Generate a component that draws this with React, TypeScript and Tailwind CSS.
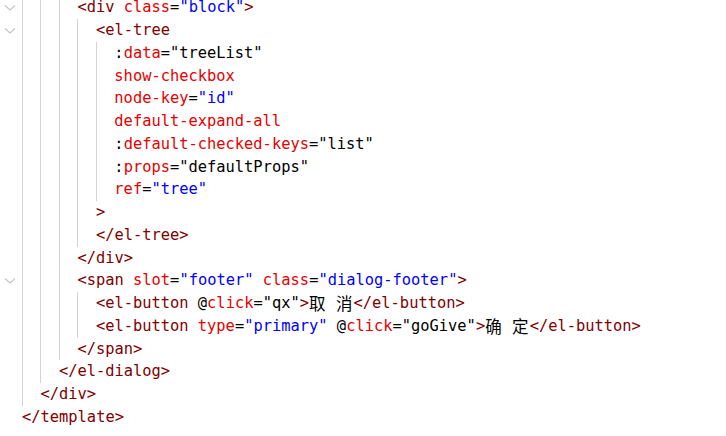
import React from 'react';

type Tok = [string, string];
type Line = { level: number; fold?: boolean; toks: Tok[] };

const colors: Record<string, string> = {
  t: 'text-[#800000]',
  a: 'text-[#e50000]',
  v: 'text-[#0000ff]',
  k: 'text-[#000000]',
  c: 'text-[#000000]',
};

const lines: Line[] = [
  { level: 3, fold: true, toks: [['t', '<div'], ['a', ' class'], ['k', '='], ['v', '"block"'], ['t', '>']] },
  { level: 4, fold: true, toks: [['t', '<el-tree']] },
  { level: 5, toks: [['k', ':'], ['a', 'data'], ['k', '="treeList"']] },
  { level: 5, toks: [['a', 'show-checkbox']] },
  { level: 5, toks: [['a', 'node-key'], ['k', '='], ['v', '"id"']] },
  { level: 5, toks: [['a', 'default-expand-all']] },
  { level: 5, toks: [['k', ':'], ['a', 'default-checked-keys'], ['k', '="list"']] },
  { level: 5, toks: [['k', ':'], ['a', 'props'], ['k', '="defaultProps"']] },
  { level: 5, toks: [['a', 'ref'], ['k', '='], ['v', '"tree"']] },
  { level: 4, toks: [['t', '>']] },
  { level: 4, toks: [['t', '</el-tree>']] },
  { level: 3, toks: [['t', '</div>']] },
  {
    level: 3,
    fold: true,
    toks: [['t', '<span'], ['a', ' slot'], ['k', '='], ['v', '"footer"'], ['a', ' class'], ['k', '='], ['v', '"dialog-footer"'], ['t', '>']],
  },
  {
    level: 4,
    toks: [['t', '<el-button'], ['k', ' @'], ['a', 'click'], ['k', '="qx"'], ['t', '>'], ['c', '取'], ['k', ' '], ['c', '消'], ['t', '</el-button>']],
  },
  {
    level: 4,
    toks: [
      ['t', '<el-button'], ['a', ' type'], ['k', '='], ['v', '"primary"'], ['k', ' @'], ['a', 'click'], ['k', '="goGive"'],
      ['t', '>'], ['c', '确'], ['k', ' '], ['c', '定'], ['t', '</el-button>'],
    ],
  },
  { level: 3, toks: [['t', '</span>']] },
  { level: 2, toks: [['t', '</el-dialog>']] },
  { level: 1, toks: [['t', '</div>']] },
  { level: 0, toks: [['t', '</template>']] },
];

function Chevron() {
  return (
    <svg width="12" height="8" viewBox="0 0 12 8" className="text-[#c4c4c4]">
      <path d="M1 1.5 L6 6 L11 1.5" fill="none" stroke="currentColor" strokeWidth="1.1" />
    </svg>
  );
}

export default function App() {
  return (
    <div className="w-[726px] h-[436px] overflow-hidden bg-white">
      <div
        className="mt-[-3.6px] text-[15.4px] leading-[22.75px] whitespace-pre"
        style={{ fontFamily: '"DejaVu Sans Mono", "Liberation Mono", monospace' }}
      >
        {lines.map((ln, i) => (
          <div key={i} className="flex h-[22.75px] items-stretch">
            <div className="w-[22px] shrink-0 flex items-center justify-center pr-[2px]">
              {ln.fold ? <Chevron /> : null}
            </div>
            {Array.from({ length: ln.level }).map((_, g) => (
              <span key={g} className="w-[18.48px] shrink-0 border-l border-[#d3d3d3]" />
            ))}
            <span className="flex items-center">
              {ln.toks.map(([c, s], j) =>
                c === 'c' ? (
                  <span
                    key={j}
                    className="inline-block w-[17.6px] text-[16.5px] text-black"
                    style={{ fontFamily: '"Noto Sans CJK SC", sans-serif' }}
                  >
                    {s}
                  </span>
                ) : (
                  <span key={j} className={colors[c]}>
                    {s}
                  </span>
                )
              )}
            </span>
          </div>
        ))}
      </div>
    </div>
  );
}
